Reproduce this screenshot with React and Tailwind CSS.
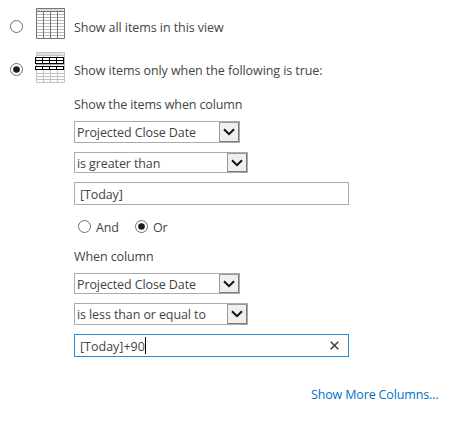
import React from "react";

function Radio({ checked }) {
  return (
    <svg className="h-[15px] w-[15px] shrink-0" viewBox="0 0 15 15">
      <circle cx="7.5" cy="7.5" r="6" fill="#fff" stroke="#6e6e6e" strokeWidth="1" />
      {checked && <circle cx="7.5" cy="7.5" r="3.3" fill="#1c1c1c" />}
    </svg>
  );
}

function Hatch({ color }) {
  return (
    <path
      d="M1 3l1.5-2 1.5 2 1.5-2 1.5 2 1.5-2 1.5 2 1.5-2 1.5 2 1.5-2 1.5 2 1.5-2 1.5 2 1.5-2 1.5 2 1.5-2 1.5 2 1.5-2 1.5 2"
      fill="none"
      stroke={color}
      strokeWidth="0.6"
    />
  );
}

function AllItemsIcon() {
  return (
    <svg className="h-8 w-[30px] shrink-0" viewBox="0 0 30 32">
      <Hatch color="#999" />
      <path
        d="M1 6.5h28M1 9.5h28M1 12.5h28M1 15.5h28M1 18.5h28M1 21.5h28M1 24.5h28M1 27.5h28"
        stroke="#b8b8b8"
      />
      <path d="M1.5.5h28v30h-28zM1 3.5h28M8.5 3v28M15.5 3v28M22.5 3v28" fill="none" stroke="#757575" />
    </svg>
  );
}

function FilteredItemsIcon() {
  return (
    <svg className="h-8 w-[30px] shrink-0" viewBox="0 0 30 32">
      <Hatch color="#aaa" />
      <path
        d="M1.5.5h28v30h-28zM1 3.5h28M1 21.5h28M1 24.5h28M1 27.5h28M8.5 4v27M15.5 4v27M22.5 4v27"
        fill="none"
        stroke="#c2c2c2"
      />
      <path d="M1 12.5h28" stroke="#aaa" />
      <path d="M.5 5.5h28v6h-28zM.5 14.5h28v3h-28z" fill="#fff" stroke="#000" strokeWidth="1.1" />
      <path d="M0 8.5h29M7.5 5v7M14.5 5v7M21.5 5v7M7.5 14v4M14.5 14v4M21.5 14v4" stroke="#000" />
    </svg>
  );
}

function Select({ className, children }) {
  return (
    <div className={`flex border border-[#ababab] bg-white pl-[2px] ${className}`}>
      <span className="flex-1">{children}</span>
      <span className="flex w-5 justify-center border border-t-[#999] border-r-[#7c7c7c] border-b-[#7c7c7c] border-l-[#999] bg-[#efefef] pt-[5px]">
        <svg className="h-2 w-3" viewBox="0 0 12 8">
          <path d="M1 1.2l5 5 5-5" fill="none" stroke="#111" strokeWidth="2" />
        </svg>
      </span>
    </div>
  );
}

export default function App() {
  return (
    <div className="h-[428px] w-[469px] overflow-hidden bg-white font-['Open_Sans','Noto_Sans',sans-serif] text-[12.5px] leading-[22px] tracking-[-0.1px] whitespace-nowrap text-[#444]">
      <div className="flex h-11 pt-2 pl-[9px]">
        <div className="pt-[11px]"><Radio /></div>
        <div className="w-[50px] pl-[11px]"><AllItemsIcon /></div>
        <span className="pt-[9px] tracking-[-0.07px]">Show all items in this view</span>
      </div>
      <div className="flex h-[50px] pt-2 pl-[9px]">
        <div className="pt-[10px]"><Radio checked /></div>
        <div className="w-[50px] pl-[11px]"><FilteredItemsIcon /></div>
        <span className="pt-2 tracking-[-0.08px]">Show items only when the following is true:</span>
      </div>
      <div className="flex flex-col items-start pl-[74px]">
        <span className="h-[27px] tracking-[-0.13px]">Show the items when column</span>
        <Select className="h-[22px] w-[166px]">Projected Close Date</Select>
        <Select className="mt-[9px] h-[21px] w-[174px]">is greater than</Select>
        <div className="mt-[9px] h-[23px] w-[275px] border border-[#ababab] pt-px pl-[5px]">[Today]</div>
        <div className="mt-3 flex h-[29px] pl-[3px]">
          <div className="pt-[2px]"><Radio /></div>
          <span className="w-[42px] pl-1">And</span>
          <div className="pt-[2px]"><Radio checked /></div>
          <span className="pl-1">Or</span>
        </div>
        <span className="h-[27px]">When column</span>
        <Select className="h-[21px] w-[166px]">Projected Close Date</Select>
        <Select className="mt-[9px] h-[22px] w-[174px]">is less than or equal to</Select>
        <div className="mt-[9px] flex h-[23px] w-[275px] border border-[#2a8dd4] pt-px pr-[9px] pl-[5px]">
          <span className="tracking-normal">[Today]+90</span>
          <span className="mt-px h-[17px] w-px bg-black" />
          <svg className="mt-[5px] ml-auto h-[9px] w-[9px]" viewBox="0 0 9 9">
            <path d="M.7.7l7.6 7.6M8.3.7L.7 8.3" stroke="#444" strokeWidth="1.6" />
          </svg>
        </div>
      </div>
      <div className="mt-[27px] pl-[311px] tracking-[-0.15px] text-[#0072c6]">Show More Columns...</div>
    </div>
  );
}
